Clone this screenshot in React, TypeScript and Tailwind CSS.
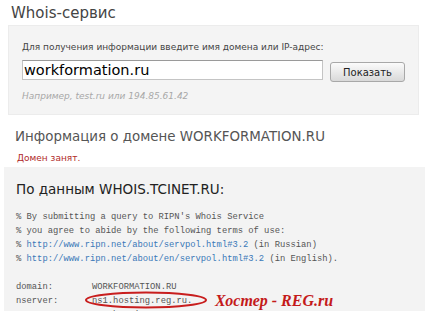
import React from "react";

export default function App() {
  const mono = "font-['Liberation_Mono',monospace] text-[8.8px] leading-[14px] text-[#555] whitespace-pre";
  const link = "text-[#3a78b8]";
  return (
    <div className="relative w-[434px] h-[311px] overflow-hidden bg-white font-['DejaVu_Sans',Verdana,sans-serif]">
      <div className="pl-[11px] pt-[3px] text-[15px] leading-[20px] text-[#444]">Whois-сервис</div>

      <div className="ml-[8px] mt-[2px] w-[411px] bg-[#f4f4f4] border border-[#ececec] pl-[13px] pt-[15px] pb-[12px]">
        <div className="text-[9px] leading-[12px] text-[#444]">
          Для получения информации введите имя домена или IP-адрес:
        </div>
        <div className="mt-[7px] flex items-start gap-[7px]">
          <div className="w-[301px] h-[20px] bg-white border border-[#c4c4c4] border-t-[#9a9a9a] pl-[1px] text-[14.5px] leading-[18px] text-black">
            workformation.ru
          </div>
          <div className="mt-[2px] w-[75px] h-[20px] flex items-center justify-center rounded-[3px] border border-[#a8a8a8] bg-gradient-to-b from-[#fbfbfb] to-[#d9d9d9] text-[10px] text-[#222]">
            Показать
          </div>
        </div>
        <div className="mt-[8px] text-[9px] leading-[12px] italic text-[#a8a8a8]">
          Например, test.ru или 194.85.61.42
        </div>
      </div>

      <div className="pl-[15px] mt-[14px] text-[13.4px] leading-[16px] text-[#555]">
        Информация о домене WORKFORMATION.RU
      </div>
      <div className="pl-[17px] mt-[7px] text-[9px] leading-[12px] text-[#b02a2a]">Домен занят.</div>

      <div className="relative ml-[4px] mt-[3px] w-[421px] h-[160px] bg-[#f3f3f3] pl-[12px] pt-[13px]">
        <div className="text-[13.5px] leading-[18px] text-[#222]">По данным WHOIS.TCINET.RU:</div>
        <div className="mt-[12px]">
          <div className={mono}>% By submitting a query to RIPN's Whois Service</div>
          <div className={mono}>% you agree to abide by the following terms of use:</div>
          <div className={mono}>
            % <span className={link}>http://www.ripn.net/about/servpol.html#3.2</span> (in Russian)
          </div>
          <div className={mono}>
            % <span className={link}>http://www.ripn.net/about/en/servpol.html#3.2</span> (in English).
          </div>
          <div className={mono}> </div>
          <div className={mono + " flex"}>
            <span className="w-[76px]">domain:</span>
            <span>WORKFORMATION.RU</span>
          </div>
          <div className={mono + " flex"}>
            <span className="w-[76px]">nserver:</span>
            <span>ns1.hosting.reg.ru.</span>
          </div>
          <div className={mono + " flex"}>
            <span className="w-[76px]">nserver:</span>
            <span>ns2.hosting.reg.ru.</span>
          </div>
        </div>

        <svg className="absolute left-[80px] top-[123px]" width="124" height="20" viewBox="0 0 124 20">
          <ellipse cx="62" cy="10" rx="60" ry="7.5" fill="none" stroke="#c81e1e" strokeWidth="2" />
        </svg>
        <div
          className="absolute left-[211px] top-[124px] text-[16px] leading-[20px] italic font-bold text-[#c41a1a]"
          style={{ fontFamily: '"Liberation Serif", "Times New Roman", serif' }}
        >
          Хостер - REG.ru
        </div>
      </div>
    </div>
  );
}
